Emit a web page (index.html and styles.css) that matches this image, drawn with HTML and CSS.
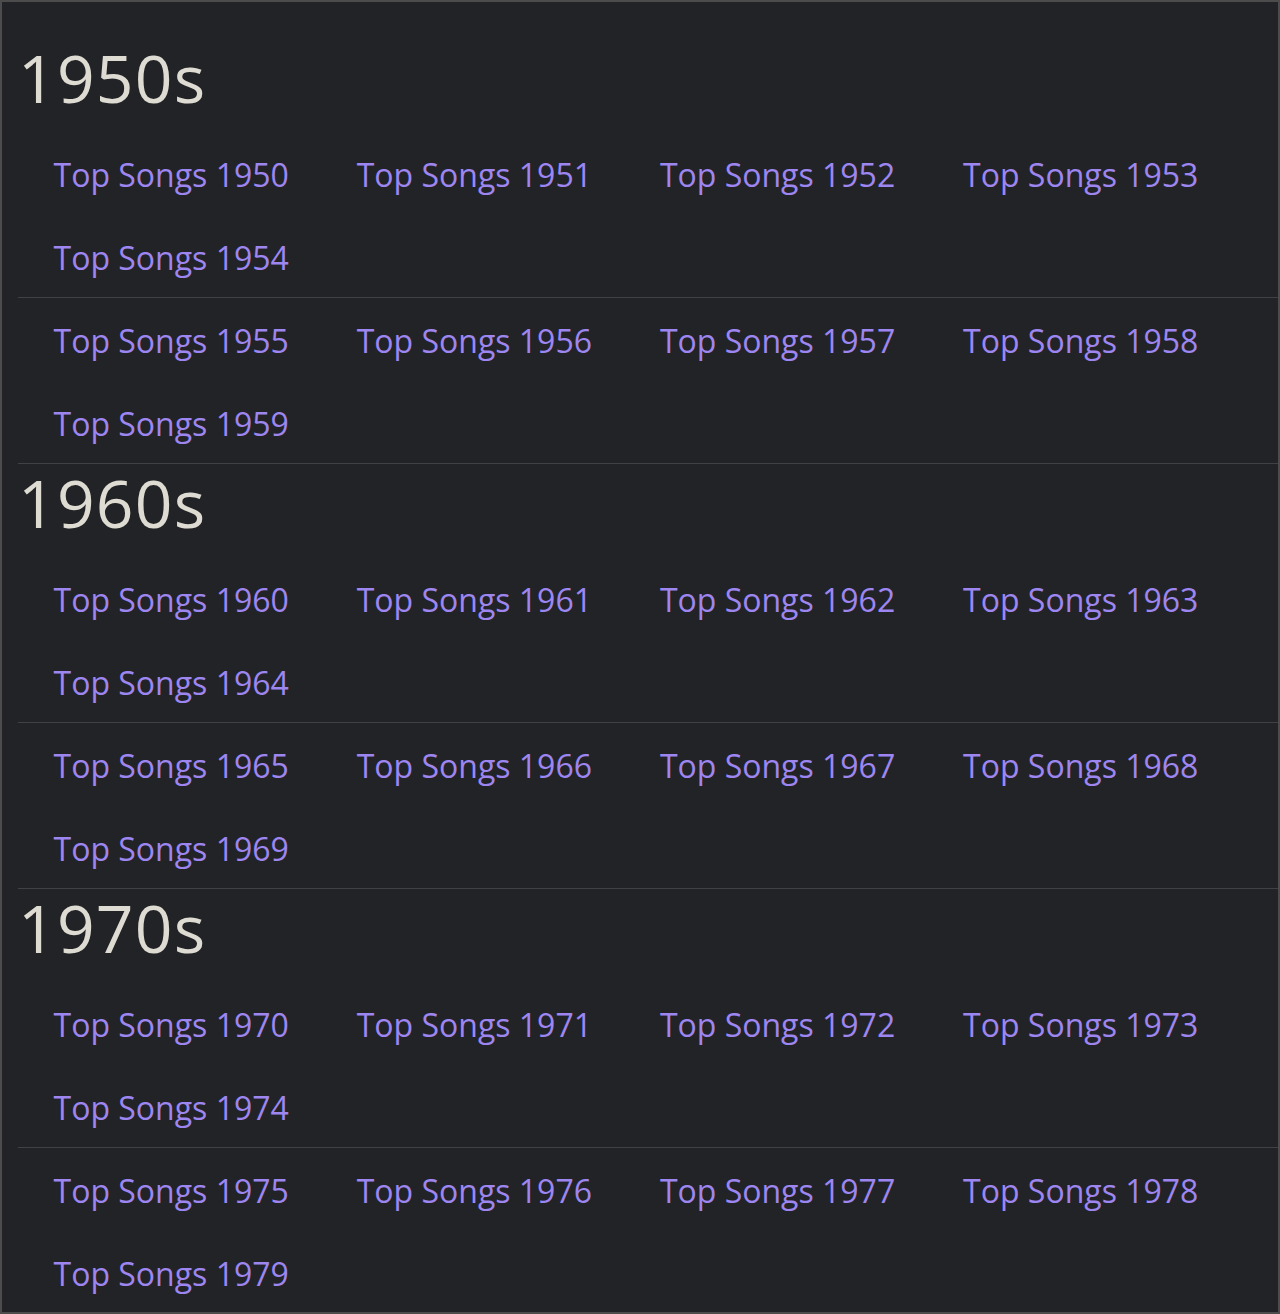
FILE: index.html
```html
<!DOCTYPE html>
<html lang="en">
<head>
<meta charset="utf-8">
<title>Top Songs by Decade</title>
<link rel="stylesheet" href="styles.css">
</head>
<body>
<main class="frame">
  <section class="decade">
    <h2 class="decade-title">1950s</h2>
    <ul class="group">
      <li><a href="#">Top Songs 1950</a></li>
      <li><a href="#">Top Songs 1951</a></li>
      <li><a href="#">Top Songs 1952</a></li>
      <li><a href="#">Top Songs 1953</a></li>
      <li><a href="#">Top Songs 1954</a></li>
    </ul>
    <ul class="group">
      <li><a href="#">Top Songs 1955</a></li>
      <li><a href="#">Top Songs 1956</a></li>
      <li><a href="#">Top Songs 1957</a></li>
      <li><a href="#">Top Songs 1958</a></li>
      <li><a href="#">Top Songs 1959</a></li>
    </ul>
  </section>
  <section class="decade">
    <h2 class="decade-title">1960s</h2>
    <ul class="group">
      <li><a href="#">Top Songs 1960</a></li>
      <li><a href="#">Top Songs 1961</a></li>
      <li><a href="#">Top Songs 1962</a></li>
      <li><a href="#">Top Songs 1963</a></li>
      <li><a href="#">Top Songs 1964</a></li>
    </ul>
    <ul class="group">
      <li><a href="#">Top Songs 1965</a></li>
      <li><a href="#">Top Songs 1966</a></li>
      <li><a href="#">Top Songs 1967</a></li>
      <li><a href="#">Top Songs 1968</a></li>
      <li><a href="#">Top Songs 1969</a></li>
    </ul>
  </section>
  <section class="decade">
    <h2 class="decade-title">1970s</h2>
    <ul class="group">
      <li><a href="#">Top Songs 1970</a></li>
      <li><a href="#">Top Songs 1971</a></li>
      <li><a href="#">Top Songs 1972</a></li>
      <li><a href="#">Top Songs 1973</a></li>
      <li><a href="#">Top Songs 1974</a></li>
    </ul>
    <ul class="group">
      <li><a href="#">Top Songs 1975</a></li>
      <li><a href="#">Top Songs 1976</a></li>
      <li><a href="#">Top Songs 1977</a></li>
      <li><a href="#">Top Songs 1978</a></li>
      <li><a href="#">Top Songs 1979</a></li>
    </ul>
  </section>
</main>
</body>
</html>
```
FILE: styles.css
```css
* {
  box-sizing: border-box;
}

html, body {
  margin: 0;
  padding: 0;
  background: #222326;
}

body {
  font-family: "Open Sans", "Noto Sans", sans-serif;
}

.frame {
  width: 1280px;
  height: 1314px;
  border: 2px solid #4c4c4d;
  background: #222326;
  padding: 37px 0 0 16px;
  overflow: hidden;
}

.decade-title {
  margin: 0 0 16px 0;
  font-size: 66px;
  font-weight: 400;
  letter-spacing: 1.2px;
  line-height: 77px;
  height: 77px;
  color: #dedbd3;
}

.group {
  list-style: none;
  margin: 0;
  padding: 0 0 0 35.5px;
  display: grid;
  grid-template-columns: repeat(4, 303.2px);
  grid-auto-rows: 82.5px;
  border-bottom: 1px solid #3f4144;
}

.group li {
  font-size: 32px;
  padding-top: 4px;
  line-height: 78.5px;
  white-space: nowrap;
}

.group a {
  color: #9e86f1;
  text-decoration: none;
}
```
